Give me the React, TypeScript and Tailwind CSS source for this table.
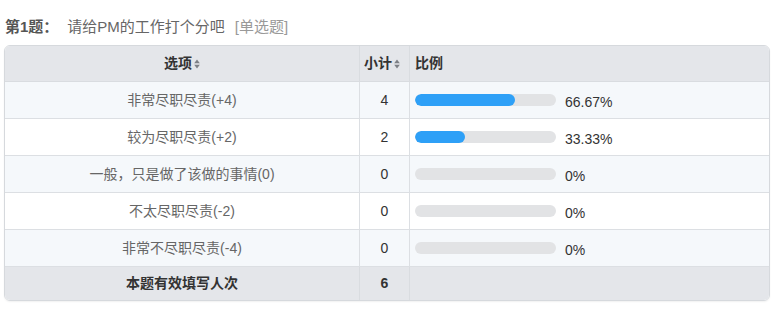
import React from "react";

const rows = [
  { label: "非常尽职尽责(+4)", count: 4, pct: 66.67 },
  { label: "较为尽职尽责(+2)", count: 2, pct: 33.33 },
  { label: "一般，只是做了该做的事情(0)", count: 0, pct: 0 },
  { label: "不太尽职尽责(-2)", count: 0, pct: 0 },
  { label: "非常不尽职尽责(-4)", count: 0, pct: 0 },
];

function SortIcon() {
  return (
    <svg width="6" height="10" viewBox="0 0 6 10" className="ml-[2px] inline-block">
      <path d="M3 0.5 L5.8 4.2 L0.2 4.2 Z" fill="#7d8086" />
      <path d="M3 9.5 L5.8 5.8 L0.2 5.8 Z" fill="#7d8086" />
    </svg>
  );
}

function fmt(p: number) {
  return p === 0 ? "0%" : p.toFixed(2) + "%";
}

export default function App() {
  return (
    <div
      className="w-[781px] h-[312px] bg-white px-[4px] pt-[16px]"
      style={{ fontFamily: '"Liberation Sans", "Noto Sans CJK SC", sans-serif' }}
    >
      <div className="flex items-center h-[22px] text-[15px] ml-[1px] mb-[7px]">
        <span className="font-bold text-[#555]">第1题：</span>
        <span className="ml-[9px] text-[#666]">请给PM的工作打个分吧</span>
        <span className="ml-[10px] text-[#999]">[单选题]</span>
      </div>
      <div className="w-[766px] border border-[#d6d9dd] rounded-[6px] overflow-hidden text-[14px] shadow-[0_1px_2px_rgba(0,0,0,0.06)]">
        <div className="grid grid-cols-[355px_50px_1fr] h-[36px] bg-[#e4e6ea] border-b border-[#d9dce0] font-bold text-[#333]">
          <div className="flex items-center justify-center border-r border-[#d9dce0]">
            选项
            <SortIcon />
          </div>
          <div className="flex items-center pl-[4px] border-r border-[#d9dce0]">
            小计
            <SortIcon />
          </div>
          <div className="flex items-center pl-[5px]">比例</div>
        </div>
        {rows.map((r, i) => (
          <div
            key={i}
            className={`grid grid-cols-[355px_50px_1fr] h-[37px] border-b border-[#dcdfe3] ${
              i % 2 === 0 ? "bg-[#f5f8fb]" : "bg-white"
            }`}
          >
            <div className="flex items-center justify-center border-r border-[#dcdfe3] text-[#666]">
              {r.label}
            </div>
            <div className="flex items-center justify-center border-r border-[#dcdfe3] text-[#333]">
              {r.count}
            </div>
            <div className="flex items-center pl-[5px]">
              <div className="w-[141px] h-[12px] rounded-full bg-[#e2e3e5] overflow-hidden">
                <div
                  className="h-full rounded-full bg-[#2ea0f7]"
                  style={{ width: `${r.pct * 1.5}px` }}
                />
              </div>
              <span className="ml-[9px] mt-[5px] text-[#333]">{fmt(r.pct)}</span>
            </div>
          </div>
        ))}
        <div className="grid grid-cols-[355px_50px_1fr] h-[33px] bg-[#e4e6ea] font-bold text-[#333]">
          <div className="flex items-center justify-center border-r border-[#d9dce0]">本题有效填写人次</div>
          <div className="flex items-center justify-center border-r border-[#d9dce0]">6</div>
          <div />
        </div>
      </div>
    </div>
  );
}
